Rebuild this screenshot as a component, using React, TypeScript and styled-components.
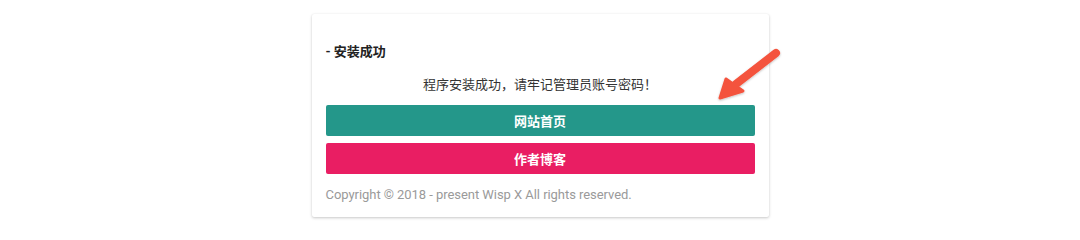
import React from "react";
import styled, { createGlobalStyle } from "styled-components";

const Global = createGlobalStyle`
  html, body { margin: 0; padding: 0; background: #ffffff; }
  body { font-family: Roboto, "Noto Sans CJK SC", sans-serif; }
`;

const Page = styled.div`
  position: relative;
  width: 1080px;
  height: 232px;
  display: flex;
  justify-content: center;
  align-items: flex-start;
  padding-top: 14px;
  box-sizing: border-box;
`;

const Card = styled.div`
  width: 457px;
  box-sizing: border-box;
  background: #fff;
  padding: 29px 14px 13px;
  box-shadow: 0 1px 3px rgba(0, 0, 0, 0.22), 0 0 1px rgba(0, 0, 0, 0.06);
  border-radius: 2px;
  display: flex;
  flex-direction: column;
`;

const Heading = styled.div`
  font-family: Roboto, "Noto Sans CJK SC", sans-serif;
  font-size: 13px;
  font-weight: 700;
  line-height: 18px;
  color: #222;
`;

const Message = styled.div`
  margin-top: 15px;
  text-align: center;
  font-size: 13px;
  line-height: 18px;
  color: #333;
`;

const Actions = styled.div`
  margin-top: 11px;
  display: flex;
  flex-direction: column;
  gap: 7px;
`;

const Button = styled.a<{ $bg: string }>`
  display: flex;
  align-items: center;
  justify-content: center;
  height: 31px;
  border-radius: 2px;
  background: ${(p) => p.$bg};
  color: #fff;
  font-size: 13px;
  font-weight: 700;
  text-decoration: none;
`;

const Footer = styled.div`
  margin-top: 12px;
  font-size: 13px;
  letter-spacing: -0.05px;
  line-height: 18px;
  color: #9a9a9a;
`;

const Arrow = styled.svg`
  position: absolute;
  left: 712px;
  top: 44px;
  overflow: visible;
`;

export default function App() {
  return (
    <>
      <Global />
      <Page>
        <Card>
          <Heading>- 安装成功</Heading>
          <Message>程序安装成功，请牢记管理员账号密码！</Message>
          <Actions>
            <Button $bg="#24978a">网站首页</Button>
            <Button $bg="#e91e63">作者博客</Button>
          </Actions>
          <Footer>Copyright © 2018 - present Wisp X All rights reserved.</Footer>
        </Card>
        <Arrow width="76" height="62" viewBox="0 0 76 62">
          <defs>
            <filter id="sh" x="-20%" y="-20%" width="140%" height="140%">
              <feDropShadow dx="0" dy="1" stdDeviation="1.2" floodColor="#000" floodOpacity="0.25" />
            </filter>
          </defs>
          <g filter="url(#sh)">
            <line x1="64" y1="9" x2="24" y2="40" stroke="#f4533d" strokeWidth="8" strokeLinecap="round" />
            <polygon points="8,54 14,35 31,47" fill="#f4533d" stroke="#f4533d" strokeWidth="3" strokeLinejoin="round" />
          </g>
        </Arrow>
      </Page>
    </>
  );
}
